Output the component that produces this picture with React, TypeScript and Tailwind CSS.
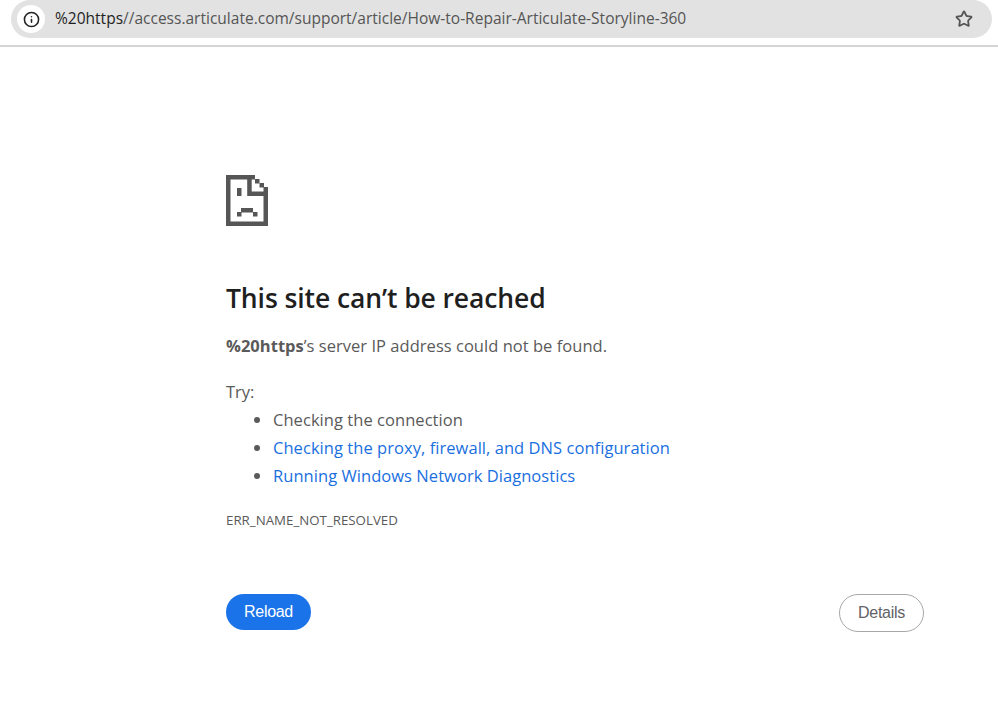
import { Info, Star } from 'lucide-react';

const suggestions = [
  { text: 'Checking the connection', link: false },
  { text: 'Checking the proxy, firewall, and DNS configuration', link: true },
  { text: 'Running Windows Network Diagnostics', link: true },
];

// Chrome's pixel "sad tab" document
const SadPage = () => (
  <svg width="42" height="51" viewBox="0 0 42 51" fill="#565656" className="block">
    <path d="M0 0H29V4.5H25.7V16.5H37.5V12H42V51H0ZM4.5 4.5V46.5H37.5V21H21.2V4.5Z" fillRule="evenodd" />
    <rect x="29" y="4" width="4.5" height="4.5" />
    <rect x="33.5" y="8" width="4.5" height="4.5" />
    <rect x="11" y="13" width="4.5" height="8" />
    <rect x="15" y="33" width="12" height="4.5" />
    <rect x="11" y="37" width="4.5" height="4.5" />
    <rect x="27" y="37" width="4.5" height="4.5" />
  </svg>
);

export default function App() {
  return (
    <div className="h-[705px] w-[998px] overflow-hidden bg-white font-['Open_Sans',sans-serif]">
      {/* Address bar */}
      <div className="h-[47px] border-b-2 border-[#d4d4d4] pl-[11px] pr-[6px]">
        <div className="flex h-[38px] items-center rounded-full bg-[#e2e2e2] pl-[6px] pr-[19px]">
          <div className="flex h-[28px] w-[28px] items-center justify-center rounded-full bg-white">
            <Info size={17} strokeWidth={2.2} className="text-[#222222]" />
          </div>
          <div className="ml-[10px] flex-1 text-[15.53px] text-[#555555]">
            <span className="text-[#1f1f1f]">%20https</span>//access.articulate.com/support/article/How-to-Repair-Articulate-Storyline-360
          </div>
          <Star size={18} strokeWidth={2.4} className="text-[#555555]" />
        </div>
      </div>

      {/* Error content */}
      <div className="ml-[226px] w-[698px] pt-[128px]">
        <SadPage />
        <h1 className="mt-[54px] text-[26.5px] leading-[36px] font-semibold tracking-[-0.1px] text-[#1f1f1f]">
          This site can’t be reached
        </h1>
        <p className="mt-[18px] text-[16.5px] leading-[24px] tracking-[0.03px] text-[#5a5a5a]">
          <b className="font-bold">%20https</b>’s server IP address could not be found.
        </p>
        <p className="mt-[22px] text-[16.5px] leading-[24px] text-[#5a5a5a]">Try:</p>
        <ul className="mt-[2px] list-disc pl-[47px] text-[16.5px] tracking-[0.05px] text-[#5a5a5a]">
          {suggestions.map((item) => (
            <li key={item.text} className="h-[28px] leading-[28px]">
              <span className={item.link ? 'text-[#1a6fdf]' : ''}>{item.text}</span>
            </li>
          ))}
        </ul>
        <div className="mt-[20px] text-[13.3px] leading-[20px] text-[#5a5a5a]">ERR_NAME_NOT_RESOLVED</div>
        <div className="mt-[64px] flex items-start justify-between">
          <button className="h-[36px] w-[85px] rounded-full bg-[#1a73e8] font-['Liberation_Sans',sans-serif] text-[16px] tracking-[-0.3px] text-white">
            Reload
          </button>
          <button className="h-[38px] w-[85px] rounded-full border border-[#a8a8a8] bg-white font-['Liberation_Sans',sans-serif] text-[16px] tracking-[-0.3px] text-[#5f6368]">
            Details
          </button>
        </div>
      </div>
    </div>
  );
}
